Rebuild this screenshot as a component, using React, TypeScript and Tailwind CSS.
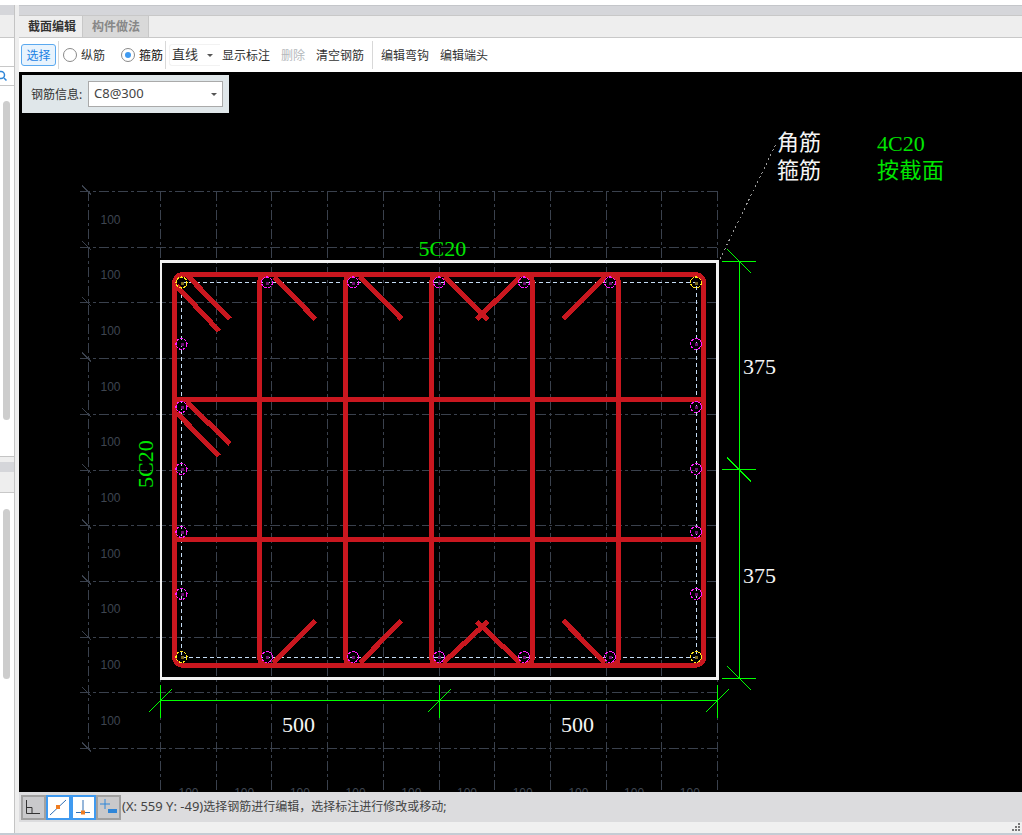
const uiFont = "font-['Noto_Sans','Noto_Sans_CJK_SC',sans-serif]";

const RED = "#c9171f";
const GRID = "#3a414d";
const GREEN = "#00ff00";
const TEXT_GREEN = "#00e600";
const CJK_TEXT = "'Liberation Serif','Noto Sans CJK SC',serif";

const gridX = Array.from({ length: 11 }, (_, i) => 160.5 + i * 55.7);
const gridY = Array.from({ length: 11 }, (_, i) => 191.5 + i * 55.7);

// inner stirrup legs, dir is the side their corners bend to
const stirrupLegs = [
  { x: 259.7, dir: 1 },
  { x: 345.7, dir: 1 },
  { x: 431.7, dir: 1 },
  { x: 532.3, dir: -1 },
  { x: 618.3, dir: -1 },
];
const stirrupY = [399.3, 539.5];

// hook segments: x1, y1, x2, y2
const hooks = [
  [186.7, 275, 230, 319],
  [176.7, 286, 219, 331],
  [274.3, 277, 315.3, 319],
  [360, 277, 401.5, 319],
  [445, 277, 487.7, 319.5],
  [520, 277, 476.7, 319.5],
  [605, 277, 563.3, 319],
  [186.7, 401.7, 230, 444],
  [176.7, 413, 219, 456],
  [273.3, 662.7, 315.3, 620.7],
  [360, 662.7, 401.5, 620.7],
  [443.3, 662.7, 487.7, 621.5],
  [520, 662.7, 476.7, 621.5],
  [605, 662.7, 563.3, 620.7],
];

const rebarX = [267, 353, 439, 524, 610];
const rebarY = [344, 407, 469, 532, 594];

function Rebar({ x, y, corner }: { x: number; y: number; corner?: boolean }) {
  return (
    <g>
      <circle cx={x} cy={y} r={5.5} fill="none" stroke={corner ? "#ffe81a" : "#ff1aff"} strokeWidth={1.1} strokeDasharray="3 1" />
      <rect x={x - 1} y={y - 1} width={3} height={3} fill={corner ? "#7a6a20" : "#6a1070"} />
    </g>
  );
}

function DimTick({ x, y, vertical }: { x: number; y: number; vertical?: boolean }) {
  return (
    <g stroke={GREEN} strokeWidth={1}>
      {vertical ? (
        <>
          <line x1={x} y1={y - 16} x2={x} y2={y + 17} />
          <line x1={x - 11.5} y1={y + 11.5} x2={x + 11.5} y2={y - 11.5} />
        </>
      ) : (
        <>
          <line x1={x - 17} y1={y} x2={x + 17} y2={y} />
          <line x1={x - 12} y1={y - 12} x2={x + 12} y2={y + 12} />
        </>
      )}
    </g>
  );
}

function SectionDrawing() {
  return (
    <svg width={1003} height={720} viewBox="19 72 1003 720" className="block" shapeRendering="crispEdges">
      {/* grid */}
      <g stroke={GRID} strokeWidth={1} strokeDasharray="10 3 3 3">
        {gridY.map((y) => (
          <line key={y} x1={80} y1={y} x2={718} y2={y} />
        ))}
        {gridX.map((x) => (
          <line key={x} x1={x} y1={191} x2={x} y2={792} />
        ))}
        <line x1={88.5} y1={191} x2={88.5} y2={749} />
      </g>
      <g stroke={GRID} strokeWidth={1}>
        {gridY.map((y) => (
          <line key={y} x1={82} y1={y - 6} x2={91} y2={y + 3} />
        ))}
      </g>
      <g fill="#3e4550" fontFamily="'Liberation Sans',sans-serif" fontSize={12}>
        {gridY.slice(0, 10).map((y) => (
          <text key={y} x={100.5} y={y + 32}>100</text>
        ))}
        {gridX.slice(0, 10).map((x) => (
          <text key={x} x={x + 18} y={797}>100</text>
        ))}
      </g>

      {/* leader */}
      <line x1={720} y1={259} x2={777} y2={142} stroke="#9a9a9a" strokeWidth={1} strokeDasharray="2 3" />

      {/* section outline */}
      <rect x={160.8} y={261.6} width={557} height={417} fill="none" stroke="#f2f2f2" strokeWidth={2.6} />

      {/* main rebar guide */}
      <rect x={181.5} y={282.5} width={514.5} height={375} fill="none" stroke="#c4dcf4" strokeWidth={1} strokeDasharray="4 3" />

      {/* stirrups */}
      <g stroke={RED} fill="none" strokeWidth={5}>
        <rect x={174.5} y={274.7} width={529.2} height={390.6} rx={8} />
        {stirrupLegs.map(({ x, dir }) => (
          <path
            key={x}
            d={`M${x + dir * 7} 275 Q${x} 275 ${x} 282 V658 Q${x} 665 ${x + dir * 7} 665`}
          />
        ))}
        {stirrupY.map((y) => (
          <line key={y} x1={172} y1={y} x2={704} y2={y} />
        ))}
        {hooks.map(([x1, y1, x2, y2], i) => (
          <line key={i} x1={x1} y1={y1} x2={x2} y2={y2} />
        ))}
      </g>

      {/* rebars */}
      <Rebar x={181.5} y={282.5} corner />
      <Rebar x={696} y={282.5} corner />
      <Rebar x={181.5} y={657} corner />
      <Rebar x={696} y={657} corner />
      {rebarX.map((x) => (
        <g key={x}>
          <Rebar x={x} y={282.5} />
          <Rebar x={x} y={657} />
        </g>
      ))}
      {rebarY.map((y) => (
        <g key={y}>
          <Rebar x={181.5} y={y} />
          <Rebar x={696} y={y} />
        </g>
      ))}

      {/* dimensions */}
      <line x1={160.5} y1={700.5} x2={717.5} y2={700.5} stroke={GREEN} strokeWidth={1} />
      <line x1={739.5} y1={261} x2={739.5} y2={678} stroke={GREEN} strokeWidth={1} />
      <DimTick x={160.5} y={700.5} vertical />
      <DimTick x={439.5} y={700.5} vertical />
      <DimTick x={717.5} y={700.5} vertical />
      <DimTick x={739} y={261} />
      <DimTick x={739} y={469.5} />
      <DimTick x={739} y={678} />

      {/* labels */}
      <g fontFamily={CJK_TEXT} fontSize={22}>
        <g fill="#f5f5f5">
          <text x={282} y={732}>500</text>
          <text x={561} y={732}>500</text>
          <text x={743} y={373.5}>375</text>
          <text x={743} y={582.5}>375</text>
          <text x={777} y={150}>角筋</text>
          <text x={777} y={178}>箍筋</text>
        </g>
        <g fill={TEXT_GREEN}>
          <text x={418.5} y={256}>5C20</text>
          <text x={877} y={151}>4C20</text>
          <text x={877} y={178} letterSpacing={0.5}>按截面</text>
          <text transform="translate(153 488) rotate(-90)">5C20</text>
        </g>
      </g>
    </svg>
  );
}

function ToolText({ children, muted }: { children: string; muted?: boolean }) {
  return <span className={muted ? "text-[#b4b8bc]" : "text-[#333333]"}>{children}</span>;
}

function Caret() {
  return <span className="w-0 h-0 border-x-[3px] border-x-transparent border-t-[3px] border-t-[#555555]" />;
}

function Separator() {
  return <span className="block w-px h-[28px] bg-[#d8d8d8]" />;
}

function Radio({ label, checked, strong }: { label: string; checked?: boolean; strong?: boolean }) {
  return (
    <label className="flex items-center gap-1">
      <span className="w-[14px] h-[14px] rounded-full border border-[#8a8a8a] bg-white flex items-center justify-center">
        {checked && <span className="w-[6px] h-[6px] rounded-full bg-[#3f9af0]" />}
      </span>
      <span className={strong ? "text-[#111111] pt-px" : "text-[#333333] pt-px"}>{label}</span>
    </label>
  );
}

function Toolbar() {
  return (
    <div className="h-[34px] bg-white flex items-center text-xs pl-[2px]">
      <button className="w-[35px] h-[22px] rounded-[3px] border border-[#5aa9f0] bg-[#e8f3fd] text-[#1d82e4] pt-px">选择</button>
      <span className="ml-[2px]"><Separator /></span>
      <div className="ml-[4px] w-[58px]"><Radio label="纵筋" /></div>
      <Radio label="箍筋" checked strong />
      <span className="ml-[2px]"><Separator /></span>
      <div className="w-[51px] h-[22px] ml-[3px] pl-[2px] flex items-center justify-between pr-[7px] text-[#333333] text-[13px] rounded-l-[3px] border-y border-l border-[#f2f2f2]">
        <span>直线</span>
        <Caret />
      </div>
      <div className="flex gap-[11px] ml-[2px] pt-px">
        <ToolText>显示标注</ToolText>
        <ToolText muted>删除</ToolText>
        <ToolText>清空钢筋</ToolText>
      </div>
      <span className="ml-[8px]"><Separator /></span>
      <div className="flex gap-[11px] ml-[8px] pt-px">
        <ToolText>编辑弯钩</ToolText>
        <ToolText>编辑端头</ToolText>
      </div>
    </div>
  );
}

function SnapButton({ active, children }: { active?: boolean; children: React.ReactNode }) {
  return (
    <div className={active ? "w-[25px] h-[25px] border-2 border-[#3f9af0] bg-white" : "w-[25px] h-[25px] border-2 border-[#a0a0a0] bg-[#c9c9cb]"}>
      <svg width={21} height={21} viewBox="0 0 21 21" className="block">{children}</svg>
    </div>
  );
}

function StatusBar() {
  return (
    <div className="h-[30px] bg-[#dcdcde] flex items-center pl-[2px] text-[#444444] text-xs whitespace-nowrap">
      <SnapButton>
        <path d="M3.5 3v13.5H17M3.5 10.5H9v6" fill="none" stroke="#333333" strokeWidth={1} />
      </SnapButton>
      <SnapButton active>
        <line x1={2} y1={18} x2={18} y2={3} stroke="#2f6fb5" strokeWidth={1} />
        <rect x={8} y={8} width={4} height={4} fill="#ef7d22" />
      </SnapButton>
      <SnapButton active>
        <path d="M10 3v13M3 15.5h14" fill="none" stroke="#2f6fb5" strokeWidth={1} />
        <rect x={8} y={13.5} width={4} height={4} fill="#ef7d22" />
      </SnapButton>
      <SnapButton>
        <path d="M7 2v10M2 7h10" fill="none" stroke="#2f86d8" strokeWidth={1} />
        <rect x={10} y={12} width={9} height={4} fill="#2f86d8" />
      </SnapButton>
      <span className="ml-px"><span className="text-[13px]">(X: 559 Y: -49)</span>选择钢筋进行编辑{"\uFF0C"}选择标注进行修改或移动;</span>
    </div>
  );
}

function SidePanel() {
  return (
    <div className="w-[15px] shrink-0 flex flex-col border-r border-[#c4c4c4] bg-[#eeeeee]">
      <div className="h-[10px] bg-[#d5d6da]" />
      <div className="h-[23px] border-b border-[#c8c8c8]" />
      <div className="h-[419px] bg-white border-b border-[#c4c4c4] pt-[28px]">
        <div className="h-[20px] border-y border-[#c8c8c8] overflow-hidden">
          <svg width={14} height={18} viewBox="0 0 14 18" className="block">
            <circle cx={1} cy={8} r={3.5} fill="none" stroke="#2f86d8" strokeWidth={1.5} />
            <line x1={4} y1={11} x2={6.5} y2={13.5} stroke="#2f86d8" strokeWidth={1.5} />
          </svg>
        </div>
        <div className="mt-[15px] ml-[3px] w-[7px] h-[319px] rounded-full bg-[#cdcdcd]" />
      </div>
      <div className="h-[5px]" />
      <div className="h-[10px] bg-[#d5d6da]" />
      <div className="h-[21px] border-b border-[#c8c8c8]" />
      <div className="flex-1 bg-white pt-[16px]">
        <div className="ml-[3px] w-[7px] h-[170px] rounded-full bg-[#cdcdcd]" />
      </div>
    </div>
  );
}

export default function App() {
  return (
    <div className={`w-[1022px] h-[835px] overflow-hidden bg-white flex flex-col ${uiFont}`}>
      <div className="h-[5px] bg-white" />
      <div className="h-[828px] flex">
        <SidePanel />
        <div className="w-[4px] shrink-0 bg-[#eeeeee]" />
        <div className="flex-1 flex flex-col min-w-0">
          <div className="h-[10px] bg-[#d5d6da] border-t border-[#c4c6ca]" />
          <div className="h-[23px] bg-[#eeeeee] border-y border-[#c8c8c8] flex text-xs font-bold">
            <div className="w-[64px] pl-[9px] flex items-center text-[#333333] border-r border-[#c8c8c8]">截面编辑</div>
            <div className="w-[66px] pl-[9px] flex items-center text-[#888888] bg-[#d9d9d9] border-r border-[#c8c8c8]">构件做法</div>
          </div>
          <Toolbar />
          <div className="relative h-[720px] bg-black overflow-hidden">
            <SectionDrawing />
            <div className="absolute left-[3px] top-[3px] w-[207px] h-[38px] bg-[#e0e7ea] flex items-center pl-[9px] text-xs text-[#333333]">
              <span className="w-[57px] pt-px">钢筋信息:</span>
              <div className="w-[135px] h-[26px] border border-[#aaaaaa] bg-white flex items-center justify-between pl-[5px] pr-[5px] text-[13px] text-[#444444]">
                <span>C8@300</span>
                <Caret />
              </div>
            </div>
          </div>
          <StatusBar />
          <div className="h-[11px] bg-[#f0f0f0] flex justify-end items-end pr-[1px] pb-px">
            <svg width={9} height={9} viewBox="0 0 9 9" className="block" fill="#777777">
              <rect x={6} y={0} width={2} height={2} />
              <rect x={3} y={3} width={2} height={2} />
              <rect x={6} y={3} width={2} height={2} />
              <rect x={0} y={6} width={2} height={2} />
              <rect x={3} y={6} width={2} height={2} />
              <rect x={6} y={6} width={2} height={2} />
            </svg>
          </div>
        </div>
      </div>
      <div className="h-[2px] bg-[#c4ccd4]" />
    </div>
  );
}
